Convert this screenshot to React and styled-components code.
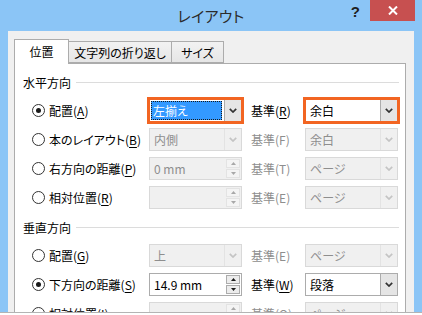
import React from 'react'
import styled, { createGlobalStyle } from 'styled-components'

const GlobalStyle = createGlobalStyle`
  html, body { margin: 0; padding: 0; background: #ffffff; }
  body {
    font-family: "Noto Sans CJK JP", "Noto Sans", sans-serif;
    font-feature-settings: "palt";
    font-size: 12px;
    color: #000;
  }
`

const Frame = styled.div`
  width: 422px;
  height: 312px;
  background: #8bc5f6;
  display: flex;
  flex-direction: column;
  overflow: hidden;
  border-bottom: 1px solid #b4b4b4;
`

const TitleBar = styled.div`
  height: 31px;
  flex: none;
  display: grid;
  grid-template-columns: 1fr auto 1fr;
  align-items: start;
`

const Title = styled.div`
  grid-column: 2;
  font-size: 15px;
  line-height: 31px;
  color: #2b2b2b;
  letter-spacing: 0.3px;
`

const Controls = styled.div`
  grid-column: 3;
  display: flex;
  justify-content: flex-end;
  align-items: flex-start;
  padding-right: 7px;
`

const Help = styled.span`
  font-family: "Liberation Sans", sans-serif;
  font-weight: bold;
  font-size: 15px;
  line-height: 24px;
  color: #1e1e1e;
  margin-right: 10px;
`

const Close = styled.div`
  width: 45px;
  height: 21px;
  background: #c75050;
  display: flex;
  align-items: center;
  justify-content: center;
`

const Client = styled.div`
  flex: 1;
  margin: 0 8px;
  background: #f0f0f0;
  padding: 8px 8px 0 6px;
  display: flex;
  flex-direction: column;
  min-height: 0;
`

const Tabs = styled.div`
  display: flex;
  align-items: flex-end;
  height: 24px;
  flex: none;
  position: relative;
  z-index: 1;
`

const Tab = styled.div`
  width: ${p => p.$w}px;
  height: ${p => (p.$active ? 25 : 22)}px;
  box-sizing: border-box;
  border: 1px solid #acacac;
  border-bottom: ${p => (p.$active ? 'none' : '1px solid #acacac')};
  margin-left: ${p => (p.$first ? 0 : -1)}px;
  margin-bottom: ${p => (p.$active ? -1 : 0)}px;
  background: ${p => (p.$active ? '#ffffff' : 'linear-gradient(#f2f2f2, #e6e6e6)')};
  display: flex;
  align-items: center;
  justify-content: center;
  font-size: 12px;
  padding-bottom: ${p => (p.$active ? 1 : 0)}px;
`

const Panel = styled.div`
  flex: 1;
  background: #ffffff;
  border: 1px solid #acacac;
  border-bottom: none;
  padding-top: 8px;
  min-height: 0;
`

const SectionHead = styled.div`
  display: flex;
  align-items: center;
  height: 20px;
  padding-left: 8px;
  margin-right: 6px;
  margin-top: ${p => p.$mt || 0}px;
  margin-bottom: 4px;
  gap: 5px;
  &::after {
    content: '';
    flex: 1;
    height: 1px;
    background: #dcdcdc;
  }
`

const Row = styled.div`
  display: grid;
  grid-template-columns: 117px 93px 63px 93px;
  align-items: center;
  height: 29px;
  padding-left: 17px;
`

const RadioLabel = styled.label`
  display: flex;
  align-items: center;
  gap: 4px;
  color: ${p => (p.$disabled ? '#8e8e8e' : '#000')};
  white-space: nowrap;
`

const RadioDot = styled.span`
  width: 13px;
  height: 13px;
  box-sizing: border-box;
  border-radius: 50%;
  border: 1px solid #333;
  background: #fff;
  display: flex;
  align-items: center;
  justify-content: center;
  flex: none;
  &::after {
    content: '';
    width: 5px;
    height: 5px;
    border-radius: 50%;
    background: ${p => (p.$checked ? '#1a1a1a' : 'transparent')};
  }
`

const Acc = styled.span`
  text-decoration: ${p => (p.$u ? 'underline' : 'none')};
  text-underline-offset: 2px;
`

const RefLabel = styled.span`
  padding-left: 9px;
  color: ${p => (p.$disabled ? '#8e8e8e' : '#000')};
  white-space: nowrap;
`

const Box = styled.div`
  height: 23px;
  box-sizing: border-box;
  border: 1px solid ${p => (p.$highlight ? '#f26522' : p.$disabled ? '#d9d9d9' : '#acacac')};
  outline: ${p => (p.$highlight ? '2px solid #f26522' : 'none')};
  background: ${p => (p.$disabled ? '#f0f0f0' : '#ffffff')};
  display: flex;
  align-items: stretch;
  color: ${p => (p.$disabled ? '#8e8e8e' : '#000')};
`

const Value = styled.div`
  flex: 1;
  display: flex;
  align-items: center;
  padding-left: 4px;
  min-width: 0;
  white-space: nowrap;
`

const Selected = styled.span`
  flex: 1;
  margin: 1px 2px 1px 1px;
  padding-left: 2px;
  background: #3399ff;
  color: #fff;
  outline: 1px dotted #1a1a1a;
  outline-offset: -1px;
  display: flex;
  align-items: center;
`

const DropBtn = styled.div`
  width: 17px;
  flex: none;
  box-sizing: border-box;
  border-left: 1px solid ${p => (p.$disabled ? '#e3e3e3' : '#acacac')};
  background: ${p => (p.$disabled ? '#f0f0f0' : '#e5e5e5')};
  display: flex;
  align-items: center;
  justify-content: center;
`

const SpinCol = styled.div`
  width: 14px;
  flex: none;
  display: flex;
  flex-direction: column;
  gap: 1px;
  padding: 1px 1px 1px 0;
`

const SpinBtn = styled.div`
  flex: 1;
  border: 1px solid ${p => (p.$disabled ? '#e3e3e3' : '#acacac')};
  background: ${p => (p.$disabled ? '#f4f4f4' : '#ececec')};
  display: flex;
  align-items: center;
  justify-content: center;
`

const Chevron = ({ disabled }) => (
  <svg width="8" height="5" viewBox="0 0 8 5">
    <polyline points="0.8,0.8 4,4 7.2,0.8" fill="none" stroke={disabled ? '#c4c4c4' : '#333'} strokeWidth="1.7" />
  </svg>
)

const Arrow = ({ up, disabled }) => (
  <svg width="5" height="3" viewBox="0 0 5 3">
    <polygon points={up ? '0,3 2.5,0 5,3' : '0,0 2.5,3 5,0'} fill={disabled ? '#a8a8a8' : '#1a1a1a'} />
  </svg>
)

const Combo = ({ value, disabled, highlight, selected }) => (
  <Box $disabled={disabled} $highlight={highlight}>
    {selected ? <Selected>{value}</Selected> : <Value>{value}</Value>}
    <DropBtn $disabled={disabled}>
      <Chevron disabled={disabled} />
    </DropBtn>
  </Box>
)

const Spin = ({ value, disabled }) => (
  <Box $disabled={disabled}>
    <Value>{value}</Value>
    <SpinCol>
      <SpinBtn $disabled={disabled}><Arrow up disabled={disabled} /></SpinBtn>
      <SpinBtn $disabled={disabled}><Arrow disabled={disabled} /></SpinBtn>
    </SpinCol>
  </Box>
)

const Radio = ({ text, acc, checked, disabled }) => (
  <RadioLabel $disabled={disabled}>
    <RadioDot $checked={checked} />
    <span>{text}(<Acc $u>{acc}</Acc>)</span>
  </RadioLabel>
)

const Ref = ({ acc, disabled }) => (
  <RefLabel $disabled={disabled}>
    基準(<Acc $u={!disabled}>{acc}</Acc>)
  </RefLabel>
)

const horizontal = [
  { text: '配置', acc: 'A', checked: true, kind: 'combo', value: '左揃え', selected: true, highlight: true, ref: 'R', refValue: '余白', refOn: true, refHighlight: true },
  { text: '本のレイアウト', acc: 'B', kind: 'combo', value: '内側', ref: 'F', refValue: '余白' },
  { text: '右方向の距離', acc: 'P', kind: 'spin', value: '0 mm', ref: 'T', refValue: 'ページ' },
  { text: '相対位置', acc: 'R', kind: 'spin', value: '', ref: 'E', refValue: 'ページ' },
]

const vertical = [
  { text: '配置', acc: 'G', kind: 'combo', value: '上', ref: 'E', refValue: 'ページ' },
  { text: '下方向の距離', acc: 'S', checked: true, kind: 'spin', value: '14.9 mm', on: true, ref: 'W', refValue: '段落', refOn: true },
  { text: '相対位置', acc: 'I', kind: 'spin', value: '', ref: 'O', refValue: 'ページ' },
]

const OptionRow = ({ r }) => {
  const off = !r.checked && !r.on
  return (
    <Row>
      <Radio text={r.text} acc={r.acc} checked={r.checked} />
      {r.kind === 'combo'
        ? <Combo value={r.value} disabled={!r.checked} highlight={r.highlight} selected={r.selected} />
        : <Spin value={r.value} disabled={off} />}
      <Ref acc={r.ref} disabled={!r.refOn} />
      <Combo value={r.refValue} disabled={!r.refOn} highlight={r.refHighlight} />
    </Row>
  )
}

export default function App() {
  return (
    <>
      <GlobalStyle />
      <Frame>
        <TitleBar>
          <Title>レイアウト</Title>
          <Controls>
            <Help>?</Help>
            <Close>
              <svg width="10" height="9" viewBox="0 0 10 9">
                <path d="M1 0.5 L9 8.5 M9 0.5 L1 8.5" stroke="#fff" strokeWidth="2" />
              </svg>
            </Close>
          </Controls>
        </TitleBar>
        <Client>
          <Tabs>
            <Tab $w={55} $active $first>位置</Tab>
            <Tab $w={104}>文字列の折り返し</Tab>
            <Tab $w={53}>サイズ</Tab>
          </Tabs>
          <Panel>
            <SectionHead>水平方向</SectionHead>
            {horizontal.map((r, i) => <OptionRow key={'h' + i} r={r} />)}
            <SectionHead $mt={5}>垂直方向</SectionHead>
            {vertical.map((r, i) => <OptionRow key={'v' + i} r={r} />)}
          </Panel>
        </Client>
      </Frame>
    </>
  )
}
